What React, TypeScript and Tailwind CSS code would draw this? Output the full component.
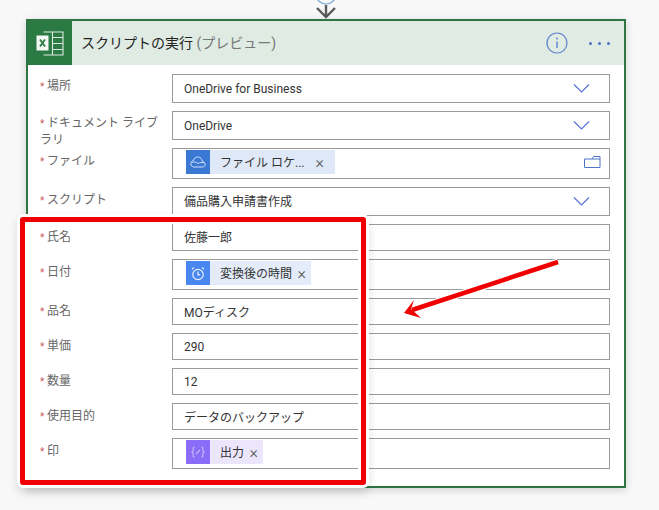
import React from "react";

const FONT = "font-['Roboto','Noto_Sans_CJK_JP',sans-serif]";

function Chevron() {
  return (
    <svg width="17" height="11" viewBox="0 0 17 11" className="mr-[11px] shrink-0" fill="none">
      <polyline points="1,1.5 8.5,9 16,1.5" stroke="#5a72d8" strokeWidth="1.2" />
    </svg>
  );
}

function FolderIcon() {
  return (
    <svg width="17" height="12" viewBox="0 0 17 12" className="mb-[4px] shrink-0" fill="none" stroke="#4f74c8" strokeWidth="1">
      <path d="M0.5 3H16V11.5H0.5Z" />
      <path d="M8 3L9.5 0.5H16V3" />
    </svg>
  );
}

function CloudIcon() {
  return (
    <svg width="16" height="12" viewBox="0 0 16 12" fill="none" stroke="#cfe0f7" strokeWidth="1">
      <path d="M4 11H12.5C14.2 11 15.2 9.8 15.2 8.4C15.2 7 14 5.8 12.6 5.8C12.2 3 10.2 1 7.8 1C5.6 1 3.8 2.4 3.4 4.6C1.8 4.8 0.8 6.2 0.8 7.8C0.8 9.6 2.2 11 4 11Z" />
      <path d="M1.5 6.5C4 5.5 6 6 8 7.5C10 6.5 12 6 14.5 7" />
    </svg>
  );
}

function ClockIcon() {
  return (
    <svg width="14" height="15" viewBox="0 0 14 15" fill="none" stroke="#e8f0ff" strokeWidth="1.2">
      <circle cx="7" cy="8.5" r="5.2" />
      <path d="M7 5.5V8.8H9.2" />
      <path d="M1 3.2L3 1.4M13 3.2L11 1.4" />
    </svg>
  );
}

function VarIcon() {
  return (
    <svg width="14" height="12" viewBox="0 0 14 12" fill="none" stroke="#c9b8fb" strokeWidth="1.2">
      <path d="M3.5 1C2 1 2.2 2.5 2.2 4C2.2 5.2 1.8 5.6 1 6C1.8 6.4 2.2 6.8 2.2 8C2.2 9.5 2 11 3.5 11" />
      <path d="M10.5 1C12 1 11.8 2.5 11.8 4C11.8 5.2 12.2 5.6 13 6C12.2 6.4 11.8 6.8 11.8 8C11.8 9.5 12 11 10.5 11" />
      <path d="M5 8L9 4" />
    </svg>
  );
}

function Chip({
  icon,
  label,
  width,
  iconBg,
  bg,
  xMargin,
}: {
  icon: React.ReactNode;
  label: string;
  width: string;
  iconBg: string;
  bg: string;
  xMargin: string;
}) {
  return (
    <div className={`flex h-6 items-center ${width} ${bg}`}>
      <span className={`flex h-6 w-6 shrink-0 items-center justify-center ${iconBg}`}>{icon}</span>
      <span className="ml-[10px] whitespace-nowrap pt-[2px] text-xs text-[#333]">{label}</span>
      <span className={`ml-auto pt-[2px] text-base font-light leading-none text-[#555] ${xMargin}`}>×</span>
    </div>
  );
}

function Field({
  label,
  height,
  text,
  chip,
  right,
  clipped,
  noTop,
  tight,
  nudge,
}: {
  label?: string;
  height: string;
  text?: string;
  chip?: React.ReactNode;
  right?: React.ReactNode;
  clipped?: boolean;
  noTop?: boolean;
  tight?: boolean;
  nudge?: boolean;
}) {
  return (
    <div className={`flex ${height}`}>
      <div className={`w-[132px] shrink-0 pr-[8px] text-xs leading-[17px] text-[#666] ${tight ? "pt-1" : "pt-[5px]"}`}>
        {label && (
          <>
            <span className="inline-block w-[7px] text-[10px] text-[#c9605c]">*</span>
            {label}
          </>
        )}
      </div>
      <div
        className={`flex min-w-0 flex-1 border border-[#9b9b9b] bg-white ${clipped ? "border-r-0" : ""} ${noTop ? "border-t-0" : ""} ${chip ? "items-start pl-[13px] pt-px" : "items-center pl-[11px]"}`}
      >
        {chip}
        {text && <span className={`whitespace-nowrap text-xs text-[#333] ${nudge ? "pt-[2px]" : ""}`}>{text}</span>}
        {right && <span className="ml-auto mr-[8px] flex self-center">{right}</span>}
      </div>
    </div>
  );
}

export default function App() {
  return (
    <div className={`relative h-[510px] w-[659px] overflow-hidden bg-[#f8f8f8] ${FONT}`}>
      <svg width="40" height="19" viewBox="0 0 40 19" className="ml-[306px] block" fill="none">
        <circle cx="20" cy="-6" r="10" stroke="#6f9fd8" strokeWidth="1.2" />
        <path d="M20 5V17M11 8L20 17L29 8" stroke="#5a5a5a" strokeWidth="2.4" />
      </svg>

      <div className="relative ml-[26px] h-[469px] w-[600px] border-2 border-[#2f7443] bg-white shadow-[0_2px_8px_rgba(0,0,0,0.16)]">
        <div className="flex h-[44px] items-center bg-[#e0ebe3]">
          <div className="flex h-[44px] w-[44px] items-center justify-center bg-[#2b7a43]">
            <svg width="28" height="25" viewBox="0 0 28 25" fill="none">
              <path d="M7.5 1H27V24H7.5" stroke="#dcebe1" strokeWidth="1.1" />
              <path d="M16.5 1V24M16.5 6.5H27M16.5 12.5H27M16.5 18.5H27" stroke="#dcebe1" strokeWidth="1.1" />
              <rect x="0.5" y="4.5" width="12" height="15" fill="#f4f8f5" />
              <path d="M4 8.5L9 15.5M9 8.5L4 15.5" stroke="#2b7a43" strokeWidth="1.8" />
            </svg>
          </div>
          <div className="ml-[9px] whitespace-nowrap text-sm text-[#222]">
            スクリプトの実行 <span className="text-[#777]">(プレビュー)</span>
          </div>
          <svg width="22" height="22" viewBox="0 0 22 22" className="ml-auto" fill="none">
            <circle cx="11" cy="11" r="10" stroke="#5f83cf" strokeWidth="1.2" />
            <path d="M11 9.5V16" stroke="#5f83cf" strokeWidth="1.4" />
            <circle cx="11" cy="6.5" r="1" fill="#5f83cf" />
          </svg>
          <div className="ml-[21px] mr-[14px] flex gap-[6px]">
            <span className="h-[3px] w-[3px] rounded-full bg-[#4f6fc0]" />
            <span className="h-[3px] w-[3px] rounded-full bg-[#4f6fc0]" />
            <span className="h-[3px] w-[3px] rounded-full bg-[#4f6fc0]" />
          </div>
        </div>

        <div className="flex flex-col gap-2 pl-[12px] pr-[14px] pt-[9px]">
          <Field label="場所" height="h-[29px]" text="OneDrive for Business" right={<Chevron />} tight />
          <Field label="ドキュメント ライブラリ" height="h-[29px]" text="OneDrive" right={<Chevron />} tight />
          <Field
            label="ファイル"
            height="h-[31px]"
            chip={
              <Chip
                icon={<CloudIcon />}
                label="ファイル ロケ..."
                width="w-[149px]"
                iconBg="bg-[#3a78d4]"
                bg="bg-[#dfe8f7]"
                xMargin="mr-[11px]"
              />
            }
            right={<FolderIcon />}
          />
          <Field label="スクリプト" height="h-[29px]" text="備品購入申請書作成" right={<Chevron />} />
          <Field height="h-[27px]" />
          <Field height="h-[31px]" />
          <Field height="h-[27px]" />
          <Field height="h-[27px]" />
          <Field height="h-[27px]" />
          <Field height="h-[27px]" />
          <Field height="h-[31px]" />
        </div>

        <div className="absolute left-[-8px] top-[196px] h-[268px] w-[346px] rounded-[3px] border-[5px] border-[#f00000] bg-white pl-[15px] pr-[3px] pt-[2px] shadow-[0_0_0_3px_#ffffff,0_5px_10px_3px_rgba(0,0,0,0.12)]">
          <div className="flex flex-col gap-2">
            <Field label="氏名" height="h-[27px]" text="佐藤一郎" clipped noTop nudge />
            <Field
              label="日付"
              height="h-[31px]"
              clipped
              chip={
                <Chip
                  icon={<ClockIcon />}
                  label="変換後の時間"
                  width="w-[125px]"
                  iconBg="bg-[#4a86f0]"
                  bg="bg-[#e4ecfa]"
                  xMargin="mr-[5px]"
                />
              }
            />
            <Field label="品名" height="h-[27px]" text="MOディスク" clipped nudge />
            <Field label="単価" height="h-[27px]" text="290" clipped />
            <Field label="数量" height="h-[27px]" text="12" clipped />
            <Field label="使用目的" height="h-[27px]" text="データのバックアップ" clipped nudge />
            <Field
              label="印"
              height="h-[31px]"
              clipped
              chip={
                <Chip
                  icon={<VarIcon />}
                  label="出力"
                  width="w-[77px]"
                  iconBg="bg-[#8b6cf6]"
                  bg="bg-[#ece6fd]"
                  xMargin="mr-[5px]"
                />
              }
            />
          </div>
        </div>
      </div>

      <svg width="659" height="510" viewBox="0 0 659 510" className="pointer-events-none absolute left-0 top-0" fill="none">
        <path d="M558 262L412 310" stroke="#ffffff" strokeWidth="7" />
        <path d="M558 262L412 310" stroke="#f00000" strokeWidth="4.5" />
        <polygon points="404,313 414,300 411,309 421,318" fill="#f00000" />
      </svg>
    </div>
  );
}
